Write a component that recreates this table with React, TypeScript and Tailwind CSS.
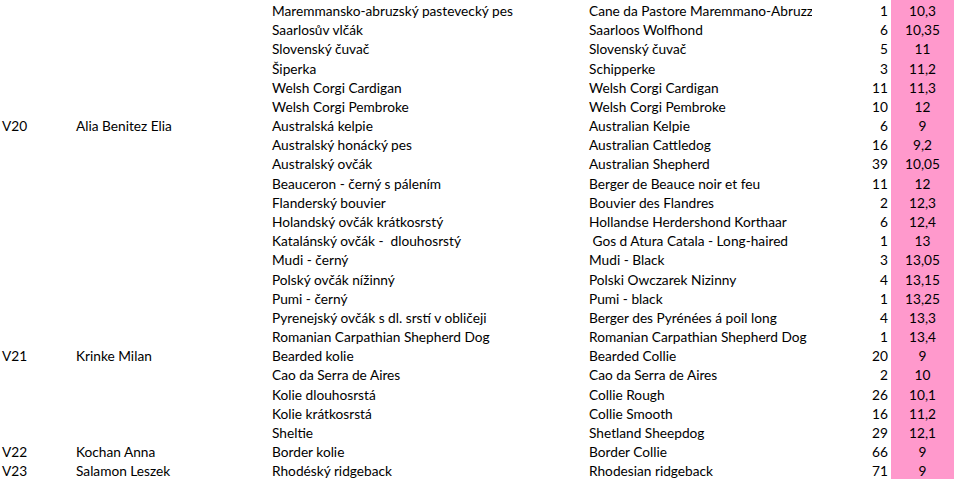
const rows: [string, string, string, string, string, string][] = [
  ['', '', 'Maremmansko-abruzský pastevecký pes', 'Cane da Pastore Maremmano-Abruzzese', '1', '10,3'],
  ['', '', 'Saarlosův vlčák', 'Saarloos Wolfhond', '6', '10,35'],
  ['', '', 'Slovenský čuvač', 'Slovenský čuvač', '5', '11'],
  ['', '', 'Šiperka', 'Schipperke', '3', '11,2'],
  ['', '', 'Welsh Corgi Cardigan', 'Welsh Corgi Cardigan', '11', '11,3'],
  ['', '', 'Welsh Corgi Pembroke', 'Welsh Corgi Pembroke', '10', '12'],
  ['V20', 'Alia Benitez Elia', 'Australská kelpie', 'Australian Kelpie', '6', '9'],
  ['', '', 'Australský honácký pes', 'Australian Cattledog', '16', '9,2'],
  ['', '', 'Australský ovčák', 'Australian Shepherd', '39', '10,05'],
  ['', '', 'Beauceron - černý s pálením', 'Berger de Beauce noir et feu', '11', '12'],
  ['', '', 'Flanderský bouvier', 'Bouvier des Flandres', '2', '12,3'],
  ['', '', 'Holandský ovčák krátkosrstý', 'Hollandse Herdershond Korthaar', '6', '12,4'],
  ['', '', 'Katalánský ovčák -  dlouhosrstý', ' Gos d Atura Catala - Long-haired', '1', '13'],
  ['', '', 'Mudi - černý', 'Mudi - Black', '3', '13,05'],
  ['', '', 'Polský ovčák nížinný', 'Polski Owczarek Nizinny', '4', '13,15'],
  ['', '', 'Pumi - černý', 'Pumi - black', '1', '13,25'],
  ['', '', 'Pyrenejský ovčák s dl. srstí v obličeji', 'Berger des Pyrénées á poil long', '4', '13,3'],
  ['', '', 'Romanian Carpathian Shepherd Dog', 'Romanian Carpathian Shepherd Dog', '1', '13,4'],
  ['V21', 'Krinke Milan', 'Bearded kolie', 'Bearded Collie', '20', '9'],
  ['', '', 'Cao da Serra de Aires', 'Cao da Serra de Aires', '2', '10'],
  ['', '', 'Kolie dlouhosrstá', 'Collie Rough', '26', '10,1'],
  ['', '', 'Kolie krátkosrstá', 'Collie Smooth', '16', '11,2'],
  ['', '', 'Sheltie', 'Shetland Sheepdog', '29', '12,1'],
  ['V22', 'Kochan Anna', 'Border kolie', 'Border Collie', '66', '9'],
  ['V23', 'Salamon Leszek', 'Rhodéský ridgeback', 'Rhodesian ridgeback', '71', '9'],
];

export default function App() {
  return (
    <div className="w-[960px] h-[483px] bg-white overflow-hidden text-black text-[13.7px] font-['Lato','Liberation_Sans',sans-serif]">
      {rows.map((r, i) => (
        <div key={i} className="flex h-[19.18px] items-center leading-[19px]">
          <div className="w-[73px] pl-[2px] pt-[2px] whitespace-pre">{r[0]}</div>
          <div className="w-[196px] pl-[3px] pt-[2px] whitespace-pre">{r[1]}</div>
          <div className="w-[317px] pl-[3px] pt-[2px] whitespace-pre">{r[2]}</div>
          <div className="w-[226px] pl-[3px] pt-[2px] whitespace-pre overflow-hidden">{r[3]}</div>
          <div className="w-[79px] pr-[3px] pt-[2px] text-right">{r[4]}</div>
          <div className="w-[63px] h-full bg-[#ff99cc] flex items-center justify-center pt-[2px]">{r[5]}</div>
        </div>
      ))}
    </div>
  );
}
